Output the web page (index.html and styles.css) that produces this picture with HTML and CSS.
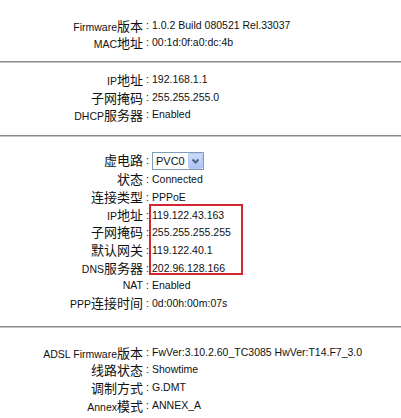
FILE: index.html
```html
<!DOCTYPE html>
<html>
<head>
<meta charset="utf-8">
<link rel="stylesheet" href="styles.css">
</head>
<body>
<div class="sec s1">
  <div class="grid">
    <div class="lab">Firmware<span class="zh">版本</span></div><div class="colon">:</div><div class="val">1.0.2 Build 080521 Rel.33037</div>
    <div class="lab">MAC<span class="zh">地址</span></div><div class="colon">:</div><div class="val">00:1d:0f:a0:dc:4b</div>
  </div>
</div>
<div class="rule r1"></div>
<div class="sec s2">
  <div class="grid">
    <div class="lab">IP<span class="zh">地址</span></div><div class="colon">:</div><div class="val">192.168.1.1</div>
    <div class="lab"><span class="zh">子网掩码</span></div><div class="colon">:</div><div class="val">255.255.255.0</div>
    <div class="lab">DHCP<span class="zh">服务器</span></div><div class="colon">:</div><div class="val">Enabled</div>
  </div>
</div>
<div class="rule r2"></div>
<div class="sec s3">
  <div class="grid g3">
    <div class="lab"><span class="zh">虚电路</span></div><div class="colon">:</div>
    <div class="val"><div class="select"><span class="sel-text">PVC0</span><span class="sel-btn"><svg width="13" height="14" viewBox="0 0 13 14"><path d="M3.5 5.5 L6.5 8.5 L9.5 5.5" fill="none" stroke="#4d6185" stroke-width="2"/></svg></span></div></div>
    <div class="lab"><span class="zh">状态</span></div><div class="colon">:</div><div class="val">Connected</div>
    <div class="lab"><span class="zh">连接类型</span></div><div class="colon">:</div><div class="val">PPPoE</div>
    <div class="lab">IP<span class="zh">地址</span></div><div class="colon">:</div><div class="val hr4">119.122.43.163</div>
    <div class="lab"><span class="zh">子网掩码</span></div><div class="colon">:</div><div class="val hr5">255.255.255.255</div>
    <div class="lab"><span class="zh">默认网关</span></div><div class="colon">:</div><div class="val hr6">119.122.40.1</div>
    <div class="lab">DNS<span class="zh">服务器</span></div><div class="colon">:</div><div class="val hr7">202.96.128.166</div>
    <div class="lab">NAT</div><div class="colon">:</div><div class="val">Enabled</div>
    <div class="lab">PPP<span class="zh">连接时间</span></div><div class="colon">:</div><div class="val">0d:00h:00m:07s</div>
    <div class="highlight"></div>
  </div>
</div>
<div class="rule r3"></div>
<div class="sec s4">
  <div class="grid">
    <div class="lab">ADSL Firmware<span class="zh">版本</span></div><div class="colon">:</div><div class="val">FwVer:3.10.2.60_TC3085 HwVer:T14.F7_3.0</div>
    <div class="lab"><span class="zh">线路状态</span></div><div class="colon">:</div><div class="val">Showtime</div>
    <div class="lab"><span class="zh">调制方式</span></div><div class="colon">:</div><div class="val">G.DMT</div>
    <div class="lab">Annex<span class="zh">模式</span></div><div class="colon">:</div><div class="val">ANNEX_A</div>
  </div>
</div>
</body>
</html>
```
FILE: styles.css
```css
html, body {
  margin: 0;
  padding: 0;
  background: #ffffff;
}
body {
  width: 401px;
  height: 418px;
  overflow: hidden;
  font-family: "Liberation Sans", Arial, "Noto Sans CJK SC", sans-serif;
  font-size: 10.5px;
  color: #111111;
}
.grid {
  display: grid;
  grid-template-columns: 143px 9px 1fr;
  grid-auto-rows: 17.7px;
  line-height: 17.7px;
}
.lab {
  text-align: right;
  white-space: nowrap;
}
.zh {
  font-family: "Noto Sans CJK SC", sans-serif;
  font-size: 13px;
}
.colon {
  text-align: center;
}
.val {
  white-space: nowrap;
}
.s1 { padding-top: 16.6px; }
.r1 { margin-top: 9px; }
.s2 { padding-top: 8.15px; }
.r2 { margin-top: 11px; }
.s3 { padding-top: 13.5px; }
.r3 { margin-top: 13.25px; }
.s4 { padding-top: 15.5px; }
.rule {
  height: 0;
  border-top: 1px solid #8c8c8c;
  border-bottom: 1px solid #c4c4c4;
}
.g3 {
  grid-template-rows: 20.65px;
}
.g3 > .lab, .g3 > .colon, .g3 > .val {
  align-self: center;
}
.hr4 { grid-column: 3; grid-row: 4; }
.hr5 { grid-column: 3; grid-row: 5; }
.hr6 { grid-column: 3; grid-row: 6; }
.hr7 { grid-column: 3; grid-row: 7; }
.select {
  display: flex;
  align-items: center;
  box-sizing: border-box;
  width: 52px;
  height: 18px;
  border: 1px solid #7f9db9;
  background: #ffffff;
  line-height: 16px;
  font-size: 11px;
}
.sel-text {
  flex: 1;
  padding-left: 3px;
}
.sel-btn {
  display: flex;
  align-items: center;
  justify-content: center;
  box-sizing: border-box;
  width: 15px;
  height: 16px;
  border: 1px solid #b4c8f4;
  border-radius: 2px;
  background: linear-gradient(#cddcfb, #adc3f3);
}
.highlight {
  grid-column: 3;
  grid-row: 4 / 8;
  justify-self: start;
  box-sizing: border-box;
  width: 94px;
  margin-left: -3px;
  margin-top: -2.5px;
  margin-bottom: 2.3px;
  border: 2px solid #d3262e;
  pointer-events: none;
}
```
